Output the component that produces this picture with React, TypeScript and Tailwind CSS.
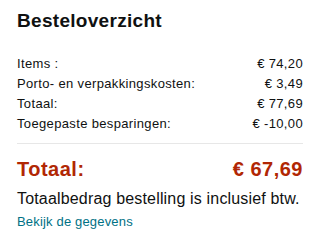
const rows = [
  { label: "Items :", value: "€ 74,20" },
  { label: "Porto- en verpakkingskosten:", value: "€ 3,49" },
  { label: "Totaal:", value: "€ 77,69" },
  { label: "Toegepaste besparingen:", value: "€ -10,00" },
];

export default function App() {
  return (
    <div className="w-[320px] h-[250px] bg-white px-[17px] pt-[9px] text-[#0f1111] font-['Liberation_Sans',Arial,sans-serif]">
      <h2 className="text-[19px] leading-[24px] font-bold tracking-[0.3px]">Besteloverzicht</h2>
      <div className="mt-[21px] flex flex-col">
        {rows.map((row) => (
          <div key={row.label} className="flex justify-between text-[13px] leading-[20px] tracking-[0.35px]">
            <span>{row.label}</span>
            <span>{row.value}</span>
          </div>
        ))}
      </div>
      <div className="mt-[9px] border-t border-[#e7e7e7]" />
      <div className="mt-[13px] flex justify-between text-[20px] leading-[24px] font-bold tracking-[0.5px] text-[#b12704]">
        <span>Totaal:</span>
        <span>€ 67,69</span>
      </div>
      <p className="mt-[7px] text-[16px] leading-[22px] tracking-[0.17px]">Totaalbedrag bestelling is inclusief btw.</p>
      <a href="#" className="mt-[2px] block text-[13px] leading-[20px] tracking-[0.17px] text-[#007185]">
        Bekijk de gegevens
      </a>
    </div>
  );
}
